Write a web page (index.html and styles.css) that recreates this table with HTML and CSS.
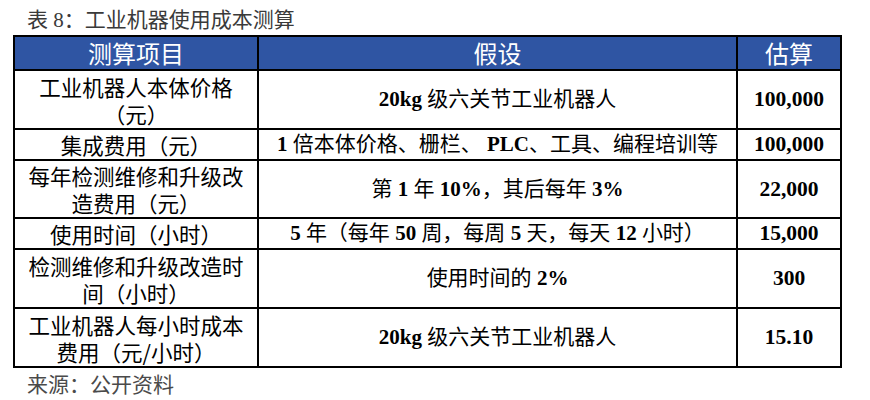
FILE: index.html
```html
<!DOCTYPE html>
<html lang="zh-CN">
<head>
<meta charset="utf-8">
<title>工业机器使用成本测算</title>
<link rel="stylesheet" href="styles.css">
</head>
<body>
<div class="page">
  <div class="caption">表 8：工业机器使用成本测算</div>
  <table class="cost">
    <colgroup>
      <col class="c1">
      <col class="c2">
      <col class="c3">
    </colgroup>
    <thead>
      <tr class="h">
        <th>测算项目</th>
        <th>假设</th>
        <th>估算</th>
      </tr>
    </thead>
    <tbody>
      <tr class="tall">
        <td class="item">工业机器人本体价格<br>（元）</td>
        <td class="assume"><b>20kg</b> 级六关节工业机器人</td>
        <td class="val">100,000</td>
      </tr>
      <tr class="short">
        <td class="item">集成费用（元）</td>
        <td class="assume"><b>1</b> 倍本体价格、栅栏、 <b>PLC</b>、工具、编程培训等</td>
        <td class="val">100,000</td>
      </tr>
      <tr class="tall2">
        <td class="item">每年检测维修和升级改<br>造费用（元）</td>
        <td class="assume">第 <b>1</b> 年 <b>10%</b>，其后每年 <b>3%</b></td>
        <td class="val">22,000</td>
      </tr>
      <tr class="short">
        <td class="item">使用时间（小时）</td>
        <td class="assume"><b>5</b> 年（每年 <b>50</b> 周，每周 <b>5</b> 天，每天 <b>12</b> 小时）</td>
        <td class="val">15,000</td>
      </tr>
      <tr class="tall">
        <td class="item">检测维修和升级改造时<br>间（小时）</td>
        <td class="assume">使用时间的 <b>2%</b></td>
        <td class="val">300</td>
      </tr>
      <tr class="tall">
        <td class="item">工业机器人每小时成本<br>费用（元/小时）</td>
        <td class="assume"><b>20kg</b> 级六关节工业机器人</td>
        <td class="val">15.10</td>
      </tr>
    </tbody>
  </table>
  <div class="source">来源：公开资料</div>
</div>
</body>
</html>
```
FILE: styles.css
```css
html, body {
  margin: 0;
  padding: 0;
  background: #ffffff;
}

.page {
  padding: 6px 0 0 13px;
  font-family: "Liberation Serif", "Noto Sans CJK SC", serif;
}

.caption,
.source {
  padding-left: 14px;
  font-size: 21px;
  line-height: 28px;
  color: #3a3a3a;
}

.caption {
  margin-bottom: 1px;
}

.source {
  margin-top: 3px;
  color: #4a4a4a;
}

.cost {
  border-collapse: collapse;
  table-layout: fixed;
  width: 829px;
  border: 2px solid #000;
}

.c1 { width: 244px; }
.c2 { width: 479px; }
.c3 { width: 104px; }

.cost th,
.cost td {
  border: 2px solid #000;
  padding: 0 4px;
  text-align: center;
  vertical-align: middle;
  color: #000;
}

.cost th {
  background: #2f55a3;
  color: #ffffff;
  font-family: "Noto Sans CJK SC", sans-serif;
  font-weight: 400;
  font-size: 24px;
  line-height: 30px;
}

.h { height: 34px; }
.tall { height: 59px; }
.tall2 { height: 58px; }
.short { height: 31px; }

.item {
  font-family: "Noto Sans CJK SC", sans-serif;
  font-size: 21.5px;
  line-height: 27px;
}

.assume {
  font-family: "Liberation Serif", "Noto Sans CJK SC", serif;
  font-size: 21px;
  line-height: 27px;
}

.assume b {
  font-weight: 700;
  font-family: "Liberation Serif", serif;
}

.val {
  font-family: "Liberation Serif", serif;
  font-weight: 700;
  font-size: 21.5px;
  line-height: 27px;
}
```
